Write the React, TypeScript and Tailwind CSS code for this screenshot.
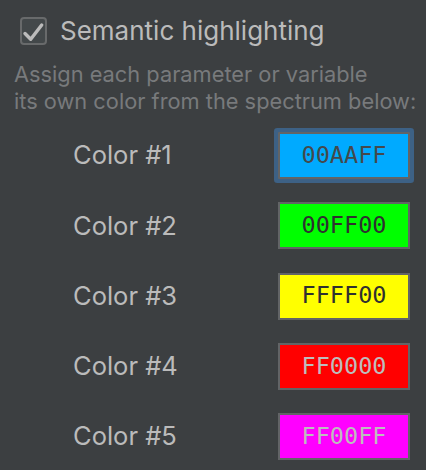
import React from 'react';

const swatches = [
    { label: 'Color #1', hex: '00AAFF', bg: 'bg-[#00aaff]', text: 'text-[#44494c]', focused: true },
    { label: 'Color #2', hex: '00FF00', bg: 'bg-[#00ff00]', text: 'text-[#2f3030]', focused: false },
    { label: 'Color #3', hex: 'FFFF00', bg: 'bg-[#ffff00]', text: 'text-[#2f3030]', focused: false },
    { label: 'Color #4', hex: 'FF0000', bg: 'bg-[#ff0000]', text: 'text-[#bdbdbd]', focused: false },
    { label: 'Color #5', hex: 'FF00FF', bg: 'bg-[#ff00ff]', text: 'text-[#bdbdbd]', focused: false },
];

function Checkbox() {
    return (
        <div className="w-[27px] h-[28px] rounded-[4px] border-2 border-[#686a6b] bg-[#43484a] flex items-center justify-center shrink-0">
            <svg width="23" height="24" viewBox="0 0 23 24" fill="none">
                <path d="M3 14.5L8.7 20.3L19.7 6" stroke="#bbbbbb" strokeWidth="3.4" strokeLinecap="round" strokeLinejoin="round" />
            </svg>
        </div>
    );
}

export default function App() {
    return (
        <div className="w-[426px] h-[470px] bg-[#3c3f41] overflow-hidden font-['Inter','Liberation_Sans',sans-serif]">
            <div className="flex items-center gap-[13px] pl-[20px] pt-[17px]">
                <Checkbox />
                <span className="text-[26px] leading-[28px] text-[#bbbbbb]">Semantic highlighting</span>
            </div>

            <p className="pl-[14px] mt-[16px] text-[21.8px] leading-[27px] text-[#787a7c]">
                Assign each parameter or variable
                <br />
                its own color from the spectrum below:
            </p>

            <div className="grid grid-cols-[205px_132px] gap-y-[23.25px] pl-[73px] mt-[17px]">
                {swatches.map((s) => (
                    <React.Fragment key={s.hex}>
                        <div className="flex items-center h-[47px] text-[25.5px] text-[#bbbbbb]">{s.label}</div>
                        <div
                            className={`h-[47px] border-2 border-[#626466] flex items-center justify-center font-['DejaVu_Sans_Mono',monospace] font-medium text-[23.5px] ${s.bg} ${s.text} ${s.focused ? 'rounded-[1px] shadow-[0_0_0_4px_#3d6185]' : ''}`}
                        >
                            {s.hex}
                        </div>
                    </React.Fragment>
                ))}
            </div>
        </div>
    );
}
